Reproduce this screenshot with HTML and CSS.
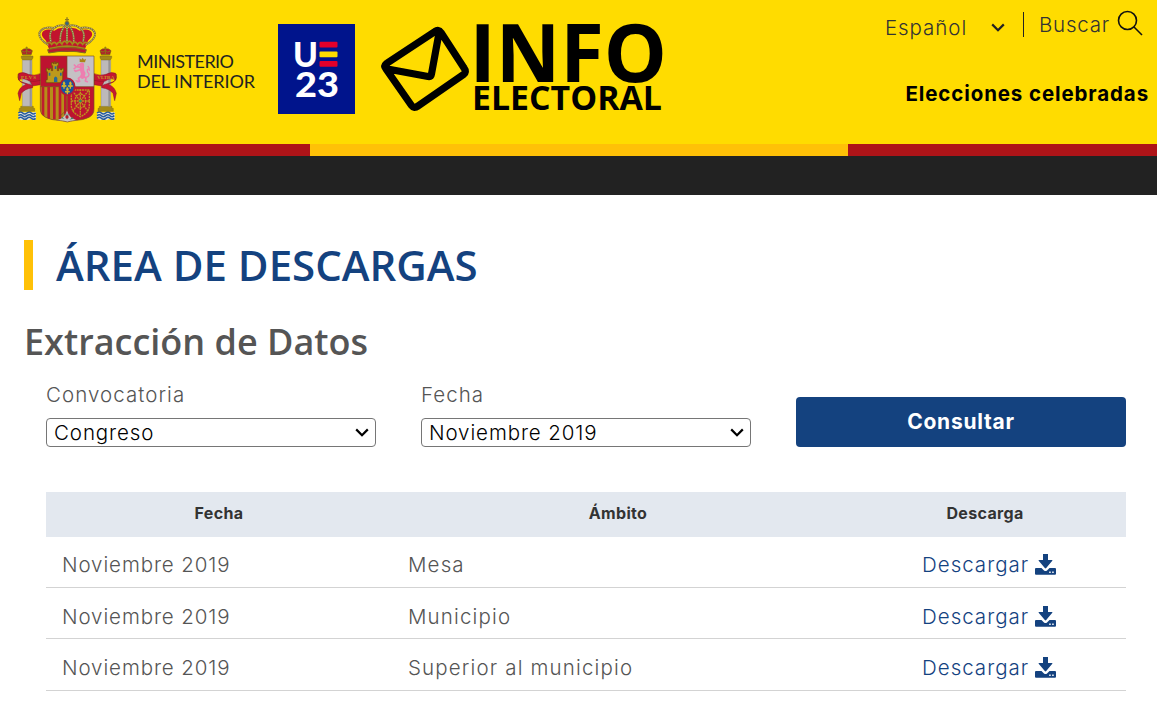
FILE: index.html
```html
<!DOCTYPE html>
<html lang="es">
<head>
<meta charset="utf-8">
<title>Área de descargas</title>
<link rel="stylesheet" href="styles.css">
</head>
<body>
<svg class="sprite" width="0" height="0">
  <symbol id="download" viewBox="0 0 21 21">
    <path d="M8 0h5v6h3.9q1 0 .4.8L11.2 14q-.7.8-1.4 0L3.7 6.800Q3.100 6 4.100 6H8z"/>
    <path fill-rule="evenodd" d="M1 14h5.500l2.500 2.500q1.500 1.200 3 0l2.500-2.500H20q1 0 1 1v4.700q0 1-1 1H1q-1 0-1-1V15q0-1 1-1zM14.200 17.600v1.500h1.500v-1.500zM17.200 17.600v1.500h1.500v-1.500z"/>
  </symbol>
  <symbol id="chevron" viewBox="0 0 14 9"><path d="M1.200 1.400L7 7.200l5.800-5.800" fill="none" stroke="currentColor" stroke-width="2.200"/></symbol>
  <symbol id="pillar" viewBox="0 0 64 226">
    <path d="M10 201h52v20l-7 4-9-4-9 4-9-4-9 4-9-4z" fill="#e4e4dc"/>
    <g fill="none" stroke="#245ba0" stroke-width="4.500"><path d="M9 203q7-6 13 0t13 0 13 0 13 0M9 211q7-6 13 0t13 0 13 0 13 0M9 219q7-6 13 0t13 0 13 0 13 0"/></g>
    <path d="M16 183h38v6h4v9H12v-9h4z" fill="#a58a18" stroke="#6d5b12"/>
    <path d="M21 43h29v140H21z" fill="#bdb9b9" stroke="#777"/>
    <path d="M43 43h6v140h-6z" fill="#969393"/>
    <path d="M18 32h35v6l-4 6H22l-4-6z" fill="#a58a18" stroke="#6d5b12"/>
    <path d="M22 29L18 16q7-8 16-5 10-3 17 5l-4 13z" fill="#b51632" stroke="#76630e" stroke-width="2"/>
    <path d="M22 27h25M34 4v22M30 8h8M20 17q7 8 14-2 7 10 14 2" fill="none" stroke="#8e7914" stroke-width="3"/>
  </symbol>
</svg>

<header class="header">
  <div class="brand">
    <svg class="arms" viewBox="0 0 345 360" role="img" aria-label="Escudo de España">
      <use href="#pillar" x="16" y="106" width="64" height="226"/>
      <use href="#pillar" x="252" y="106" width="64" height="226"/>
      <g fill="#c51632" stroke="#861326" stroke-width="1.5">
        <path d="M60 212l31-2v14l-24 4z"/>
        <path d="M26 190q14-6 29 3 17 6 36-2v20q-18 5-34 2l-5-3q-13-7-26-1z"/>
        <path d="M25 192q-3 20 12 25l24 7q10 4 7 9-25 4-34 17l-5 22-5-22q5-20 21-25l3-4q-22-3-24-18z"/>
        <path d="M283 212l-31-2v14l24 4z"/>
        <path d="M317 190q-14-6-29 3-17 6-36-2v20q18 5 34 2l5-3q13-7 26-1z"/>
        <path d="M318 192q3 20-12 25l-24 7q-10 4-7 9 25 4 34 17l5 22 5-22q-5-20-21-25l-3-4q22-3 24-18z"/>
      </g>
      <g class="motto"><text x="33" y="207" textLength="45">PLVS</text><text x="262" y="207" textLength="51">VLTRA</text></g>
      <clipPath id="shield"><path d="M91 138h161v159q0 17-15 25-14 8-45 10-10 1-20 4-10-3-20-4-31-2-45-10-16-8-16-25z"/></clipPath>
      <g clip-path="url(#shield)">
        <path d="M90 137h163v200H90z" fill="#bd1330"/>
        <path d="M171 137h82v93h-82z" fill="#c5c1c4"/>
        <path d="M90 230h82v105H90z" fill="#b68d18"/>
        <path d="M99 230v98M116 230v98M133 230v98M150 230v98M166 230v98" stroke="#be1c2f" stroke-width="8"/>
        <path d="M134 338q5-8 18-12 12-5 19-24 7 19 19 24 13 4 18 12z" fill="#c7c5c5"/>
      </g>
      <path d="M91 138h161v159q0 17-15 25-14 8-45 10-10 1-20 4-10-3-20-4-31-2-45-10-16-8-16-25zM171 138v92M91 230h161M171 230v67q-10 14-24 23" fill="none" stroke="#765223" stroke-width="2"/>
      <path d="M108 218v-9h4v-24h-3v-10h5v4h5v-4h5v7h4v-15h-3v-9h5v3h3v-6h3v6h3v-3h6v9h-3v15h4v-7h5v4h5v-4h5v10h-3v24h3v9z" fill="#bd991b" stroke="#66500b" stroke-width="2"/>
      <path d="M132 216v-12q5-9 10 0v12zM116 188h5v9h-5zM150 188h5v9h-5zM134 169h5v8h-5z" fill="#276b94"/>
      <g fill="none" stroke="#ed7fb0" stroke-linecap="round" stroke-linejoin="round">
        <path d="M216 164q-2 18 4 26l-3 10" stroke-width="13"/>
        <path d="M212 172l-14-2-5-5M211 179l-14 5-3-3M220 198l8 7-2 8 6 2M213 199l-8 6 4 9-7 1" stroke-width="5"/>
        <path d="M223 202q14 1 14-10-7-7-5-13 5-5 6 2 0-9-4-12" stroke-width="4"/>
        <path d="M209 163l-6 3M197 173l-5 3M205 214l-7-2" stroke-width="4"/>
      </g>
      <path d="M209 156v-11l5 4 4-6 4 6 6-3-3 11z" fill="#a98518"/>
      <g fill="none" stroke="#bd941d" stroke-width="4" stroke-dasharray="6 2">
        <path d="M184 240h54v46q0 22-27 34-27-12-27-34z"/>
        <path d="M211 238v79M184 273h55M187 242l48 63M235 242l-48 63"/>
        <ellipse cx="211" cy="273" rx="16" ry="21"/>
      </g>
      <circle cx="211" cy="273" r="4" fill="#269263"/>
      <ellipse cx="172" cy="230" rx="22" ry="25" fill="#1953a0" stroke="#b71833" stroke-width="5"/>
      <g fill="#d5b72b">
        <path id="lis" d="M162 214q-7 7-1 12-8-3-6 5 2-2 5 0v5h4v-5q4-2 5 0 3-8-6-5 7-4-1-12z"/>
        <use href="#lis" x="19"/><use href="#lis" x="10" y="17"/>
      </g>
      <path d="M162 326q-7-10-8-1l13 3zM181 327q8-10 9-1l-13 3z" fill="#378662"/>
      <path d="M171 328v-18M171 317l-9-5M171 317l9-5" stroke="#378662" stroke-width="2"/><circle cx="171" cy="321" r="5" fill="#b91c31"/>
      <path d="M118 120L108 92q-17-14-11-25 10-14 36-5 15-12 38-7 23-5 38 7 26-9 36 5 6 11-11 25l-10 28q-53 12-106 0z" fill="#c2142e"/>
      <g fill="none" stroke="#877637" stroke-width="6">
        <path d="M115 105Q85 87 88 69 97 47 133 54q-19 11-10 42M132 54q13-11 34-7-18 16-15 52M171 47v51M210 54q-13-11-34-7 18 16 15 52M227 105q31-18 28-36-9-22-46-15 19 11 10 42"/>
      </g>
      <g fill="none" stroke="#d8cf9c" stroke-width="3" stroke-dasharray="3 4">
        <path d="M115 105Q85 87 88 69 97 47 133 54q-19 11-10 42M132 54q13-11 34-7-18 16-15 52M171 47v51M210 54q-13-11-34-7 18 16 15 52M227 105q31-18 28-36-9-22-46-15 19 11 10 42"/>
      </g>
      <path d="M110 102q8-10 15 1 8-12 15 0 8-13 16-1 7-16 15-2 8-14 16 2 8-12 16 1 7-12 15 0 8-11 15-1M119 116q52-15 105 0" fill="none" stroke="#a38a1b" stroke-width="5"/>
      <path d="M113 119q58-13 116 0l-3 10q-54-11-110 0z" fill="#b81a30" stroke="#826c1e" stroke-width="3"/>
      <circle cx="171" cy="40" r="6" fill="#316387" stroke="#82712c" stroke-width="3"/>
      <path d="M171 22v15M165 29h12" stroke="#8c7820" stroke-width="4"/>
    </svg>
    <svg class="ministry" viewBox="0 0 122 40">
      <text x="0" y="16" textLength="97">MINISTERIO</text>
      <text x="0" y="35.5" textLength="118">DEL INTERIOR</text>
    </svg>
    <svg class="ue" viewBox="0 0 77 90">
      <path d="M0 0h77v90H0z" fill="#00148c"/>
      <text class="ue-letter" x="15" y="42.500" textLength="25" lengthAdjust="spacingAndGlyphs">U</text>
      <g><rect x="41.500" y="17.700" width="18" height="5.700" rx="1" fill="#e4002b"/><rect x="41.500" y="27.500" width="18" height="5.700" rx="1" fill="#ffdc00"/><rect x="41.500" y="37" width="18" height="5.700" rx="1" fill="#e4002b"/></g>
      <text class="ue-number" x="17" y="73" textLength="44" lengthAdjust="spacingAndGlyphs">23</text>
    </svg>
    <svg class="info" viewBox="0 0 290 92">
      <path d="M5.500 40.500Q2.500 43 5 46L30.500 82.500Q33 86 37 83L82.500 51.500Q86 49 83 45L60 9.500Q57.500 6 54 8.500L7 39.500Q3.500 42 6.500 46L47 53.500Q50 54 50.500 51L58 10" fill="none" stroke="#000" stroke-width="7.200" stroke-linejoin="round" stroke-linecap="round"/>
      <text class="info-top" x="88.500" y="59" textLength="197.500" lengthAdjust="spacingAndGlyphs">INFO</text>
      <text class="info-bottom" x="91" y="87" textLength="190" lengthAdjust="spacingAndGlyphs">ELECTORAL</text>
    </svg>
  </div>
  <div class="tools">
    <div class="top-tools">
      <div class="language">
        <select class="language-select" aria-label="Idioma"><option>Español</option></select>
        <svg class="chevron"><use href="#chevron"/></svg>
      </div>
      <a class="search">Buscar
        <svg class="lens" viewBox="0 0 26 26"><circle cx="10.500" cy="10.500" r="9" /><path d="M17 17l8 8"/></svg>
      </a>
    </div>
    <a class="elections">Elecciones celebradas</a>
  </div>
</header>
<div class="stripe"><span class="red"></span><span class="gold"></span><span class="red"></span></div>
<div class="dark"></div>

<main class="main">
  <h1 class="title">ÁREA DE DESCARGAS</h1>
  <h2 class="subtitle">Extracción de Datos</h2>
  <form class="filters">
    <label class="field"><span class="label">Convocatoria</span><span class="box"><select class="select"><option>Congreso</option></select><svg class="chevron"><use href="#chevron"/></svg></span></label>
    <label class="field"><span class="label">Fecha</span><span class="box"><select class="select"><option>Noviembre 2019</option></select><svg class="chevron"><use href="#chevron"/></svg></span></label>
    <button class="submit" type="button">Consultar</button>
  </form>
  <table class="table">
    <thead><tr><th class="c1">Fecha</th><th class="c2">Ámbito</th><th class="c3">Descarga</th></tr></thead>
    <tbody>
      <tr><td>Noviembre 2019</td><td>Mesa</td><td><a class="download"><span>Descargar</span><svg class="icon"><use href="#download"/></svg></a></td></tr>
      <tr class="middle"><td>Noviembre 2019</td><td>Municipio</td><td><a class="download"><span>Descargar</span><svg class="icon"><use href="#download"/></svg></a></td></tr>
      <tr class="last"><td>Noviembre 2019</td><td>Superior al municipio</td><td><a class="download"><span>Descargar</span><svg class="icon"><use href="#download"/></svg></a></td></tr>
    </tbody>
  </table>
</main>
</body>
</html>
```

FILE: styles.css
```css
* { box-sizing: border-box; }
body { margin: 0; background: #fff; color: #555; font: 300 20.5px/26px Inter, sans-serif; letter-spacing: .9px; overflow: hidden; }
.sprite { display: block; }
.header { display: flex; justify-content: space-between; height: 144px; background: #ffdc00; }
.brand { display: flex; align-items: flex-start; padding-left: 10px; }
.arms { width: 115px; height: 120px; margin-top: 10px; }
.motto { font: 700 15px "Liberation Serif", serif; fill: #c29c25; letter-spacing: 0; }
.ministry { width: 122px; height: 40px; margin: 52px 0 0 12px; overflow: visible; font: 400 18px Lato, sans-serif; letter-spacing: 0; fill: #222; }
.ue { width: 77px; height: 90px; margin: 24px 0 0 19px; fill: #fff; letter-spacing: 0; }
.ue-letter { font: 900 34px Lato, sans-serif; }
.ue-number { font: 900 35px Lato, sans-serif; }
.info { width: 290px; height: 92px; margin: 23px 0 0 26px; overflow: visible; letter-spacing: 0; fill: #000; }
.info-top { font: 700 80px "Open Sans", sans-serif; }
.info-bottom { font: 700 33.5px "Open Sans", sans-serif; }
.tools { display: flex; flex-direction: column; align-items: flex-end; padding: 10px 9px 0 0; }
.top-tools { display: flex; align-items: flex-start; }
.language { display: flex; align-items: center; width: 120px; height: 29px; margin: 3px 18px 0 0; color: #222; }
.language-select { appearance: none; flex: 1; min-width: 0; height: 29px; padding: 0; border: 0; background: transparent; font: inherit; letter-spacing: .95px; color: #333; }
.language .chevron { flex: none; margin: 0; }
.search { display: flex; height: 25px; margin-top: 2px; padding: 0 5px 0 15px; border-left: 1px solid #222; gap: 7px; color: #333; letter-spacing: .8px; }
.lens { width: 26px; height: 26px; margin-top: -2px; fill: none; stroke: #111; stroke-width: 1.6; }
.elections { margin-top: 39px; margin-right: -1px; color: #000; font-weight: 700; letter-spacing: .88px; }
.stripe { display: grid; grid-template-columns: 310px 1fr 309px; height: 12px; }
.red { background: #ae1418; }
.gold { background: #ffc107; }
.dark { height: 39px; background: #222; }
.main { padding: 45px 31px 0 24px; }
.title { height: 50px; margin: 0; padding-left: 23px; border-left: 9px solid #ffc107; color: #14427f; font: 600 42px/50px "Open Sans", sans-serif; letter-spacing: 0; }
.subtitle { margin: 25px 0 0; color: #555; font: 600 36px/54px "Open Sans", sans-serif; letter-spacing: 0; }
.filters { display: grid; grid-template-columns: repeat(3, 330px); gap: 45px; margin: 13px 0 0 22px; }
.field { display: flex; flex-direction: column; height: 65px; }
.label { height: 36px; letter-spacing: 1.050px; }
.box { display: flex; align-items: center; color: #000; }
.select { appearance: none; flex: none; width: 330px; height: 29px; padding: 0 7px; border: 1px solid #767676; border-radius: 4px; background: #fff; font: inherit; letter-spacing: inherit; color: #000; }
.chevron { flex: none; width: 14px; height: 9px; margin-left: -21px; pointer-events: none; }
.submit { height: 50px; margin-top: 15px; padding-bottom: 2px; border: 0; border-radius: 4px; background: #14427f; color: #fff; font: 700 21px Inter, sans-serif; letter-spacing: .75px; }
.table { width: 1080px; margin: 45px 0 0 22px; border-collapse: separate; border-spacing: 0; table-layout: fixed; }
.c1 { width: 346px; } .c2 { width: 452px; } .c3 { width: 282px; }
th { height: 45px; padding: 0 0 4px; background: #e3e8ef; color: #333; font: 700 16px/22px Inter, sans-serif; letter-spacing: .35px; }
td { height: 51px; padding: 6px 16px 0; border-bottom: 1px solid #d3d3d3; }
td:nth-child(2) { letter-spacing: 1.15px; }
td:last-child { padding: 6px 0 0 78px; letter-spacing: 1px; }
.middle td, .middle td:last-child { padding-top: 8px; }
.last td { height: 52px; }
.download { display: flex; align-items: flex-start; gap: 6px; color: #14427f; }
.icon { width: 21px; height: 21px; margin-top: 2px; fill: #14427f; }
```
